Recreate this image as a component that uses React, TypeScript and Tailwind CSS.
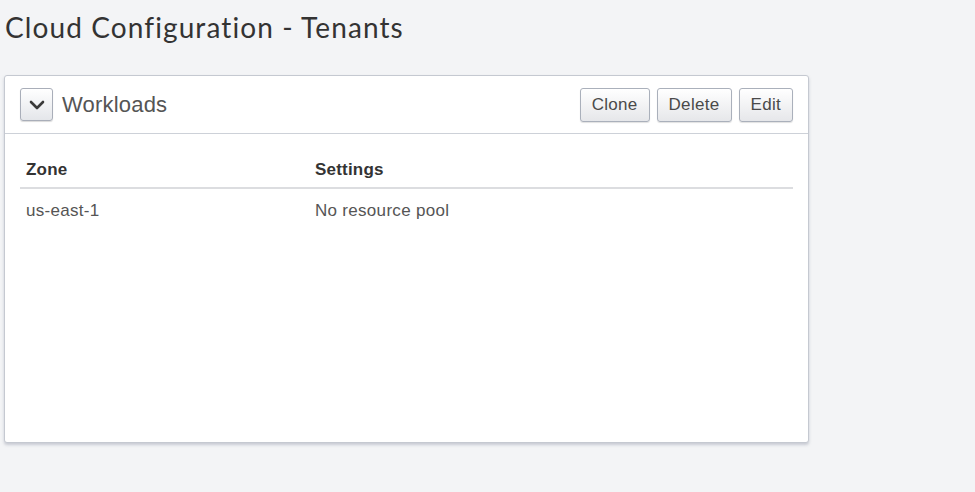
import React from 'react'

const rows = [{ zone: 'us-east-1', settings: 'No resource pool' }]

function ToolButton({ label }: { label: string }) {
  return (
    <button className="h-[34px] px-[11px] rounded-[3px] border border-[#aab0bb] bg-gradient-to-b from-white to-[#e6e7ea] text-[17px] tracking-[0.3px] text-[#4a4a4a] shadow-[0_1px_1px_rgba(0,0,0,0.12)] leading-none">
      {label}
    </button>
  )
}

export default function App() {
  return (
    <div className="min-h-[492px] bg-[#f3f4f6] pt-[8px] pl-[4px]" style={{ fontFamily: '"Liberation Sans", Arial, sans-serif' }}>
      <h1 className="pl-[1px] text-[28px] font-normal leading-[38px] text-[#333] tracking-[1.1px]" style={{ fontFamily: 'Lato, "Open Sans", sans-serif' }}>
        Cloud Configuration - Tenants
      </h1>

      <div className="mt-[29px] w-[805px] h-[368px] bg-white border border-[#c5c9d1] rounded-[3px] shadow-[0_2px_3px_rgba(120,125,145,0.35)]">
        {/* Header */}
        <div className="h-[58px] flex items-center justify-between pl-[15px] pr-[15px] border-b border-[#cdd1d8]">
          <div className="flex items-center">
            <button className="w-[33px] h-[33px] flex items-center justify-center rounded-[3px] border border-[#a9aeb9] bg-gradient-to-b from-white to-[#e4e6ea] shadow-[0_1px_1px_rgba(0,0,0,0.15)]">
              <svg width="16" height="10" viewBox="0 0 16 10" fill="none">
                <path d="M2 2l6 6 6-6" stroke="#3a3a3a" strokeWidth="2.6" strokeLinecap="round" strokeLinejoin="round" />
              </svg>
            </button>
            <span className="ml-[9px] text-[22px] tracking-[0.2px] text-[#555]">Workloads</span>
          </div>
          <div className="flex items-center gap-[7px]">
            <ToolButton label="Clone" />
            <ToolButton label="Delete" />
            <ToolButton label="Edit" />
          </div>
        </div>

        {/* Table */}
        <div className="px-[15px] pt-[18px]">
          <div className="grid grid-cols-[295px_1fr] h-[37px] items-center border-b-2 border-[#dcdde0] text-[17px] font-bold tracking-[0.2px] text-[#333]">
            <div className="pl-[6px]">Zone</div>
            <div>Settings</div>
          </div>
          {rows.map((r) => (
            <div key={r.zone} className="grid grid-cols-[295px_1fr] h-[44px] items-center text-[17px] tracking-[0.3px] text-[#555]">
              <div className="pl-[6px]">{r.zone}</div>
              <div>{r.settings}</div>
            </div>
          ))}
        </div>
      </div>
    </div>
  )
}
